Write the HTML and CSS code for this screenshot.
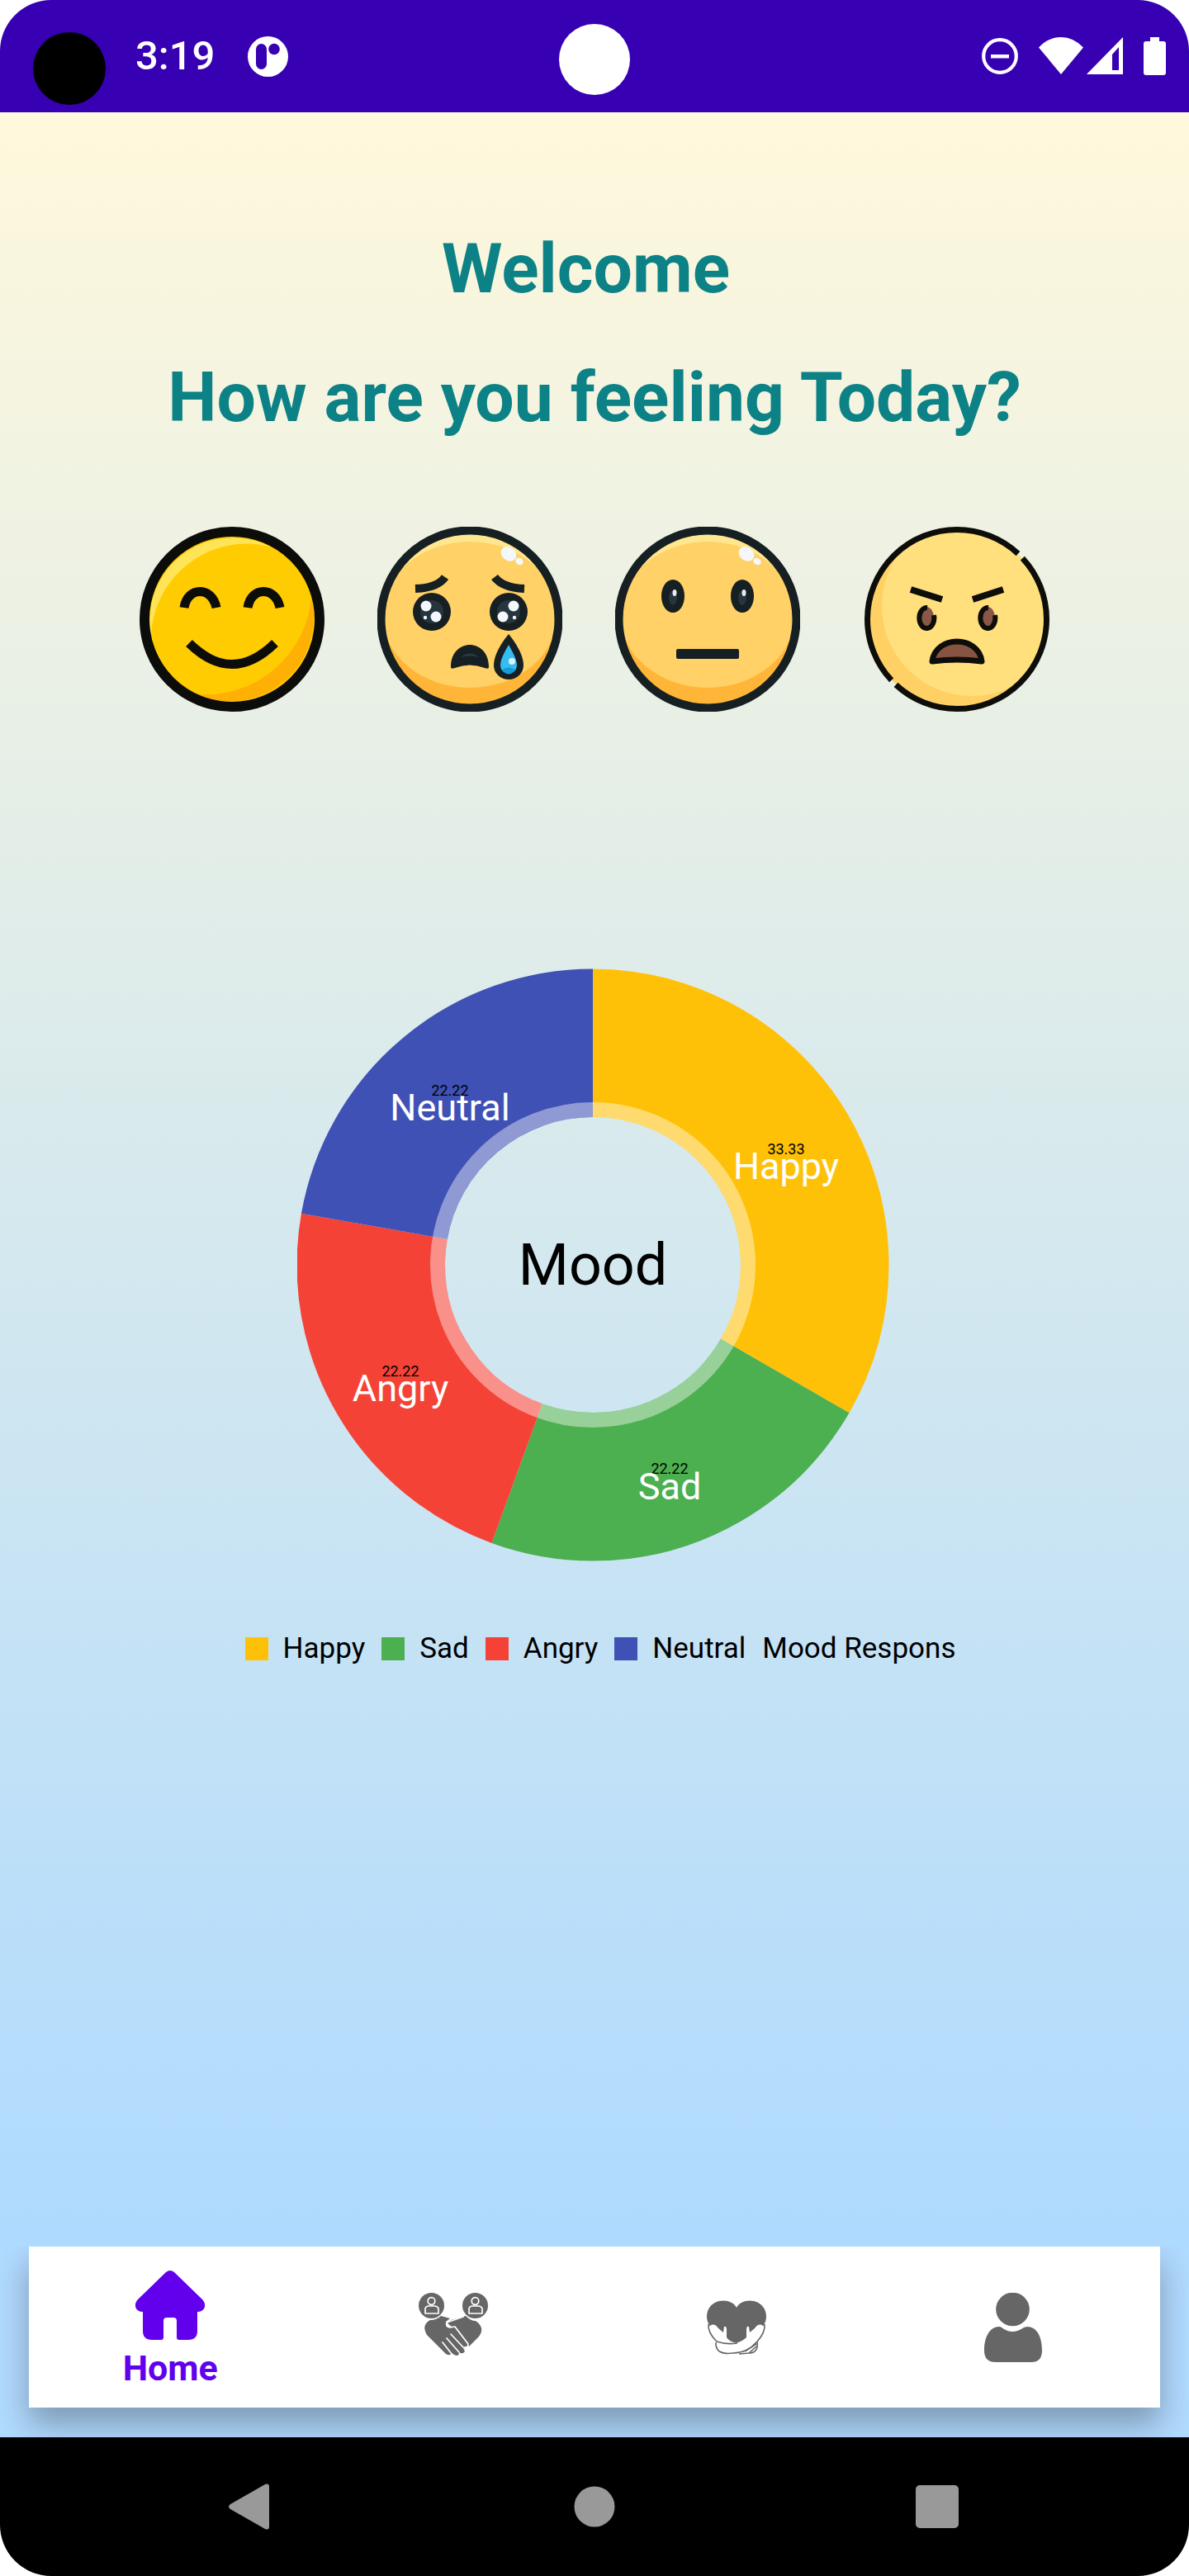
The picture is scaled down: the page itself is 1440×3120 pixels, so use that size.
FILE: index.html
```html
<!DOCTYPE html>
<html lang="en">
<head>
<meta charset="utf-8">
<meta name="viewport" content="width=device-width, initial-scale=1">
<title>Mood tracker</title>
<link rel="stylesheet" href="styles.css">
</head>
<body>
<div class="screen">
  <header class="status-bar">
    <span class="recorder-dot"></span>
    <div class="status-left">
      <span class="clock">3:19</span>
      <svg class="app-badge" viewBox="0 0 49 49" aria-hidden="true">
        <circle cx="24.500" cy="24.500" r="24.500" fill="#fff"/>
        <rect x="10" y="9" width="13" height="31" rx="6.500" fill="#3700b3"/>
        <circle cx="32" cy="15.500" r="6.800" fill="#3700b3"/>
      </svg>
    </div>
    <span class="camera"></span>
    <div class="status-right">
      <svg class="dnd" viewBox="0 0 44 44" aria-hidden="true">
        <circle cx="22" cy="22" r="19.800" fill="none" stroke="#fff" stroke-width="4.200"/>
        <rect x="11" y="20" width="22" height="4.500" fill="#fff"/>
      </svg>
      <svg class="wifi" viewBox="0 0 54 46" aria-hidden="true"><path d="M0 12.500Q12 0 27 0T54 12.500L27 45Z" fill="#fff"/></svg>
      <svg class="signal" viewBox="0 0 44 46" aria-hidden="true"><path fill-rule="evenodd" d="M44 0V45H0ZM39 12L31 21V40H39Z" fill="#fff"/></svg>
      <svg class="battery" viewBox="0 0 27 46" aria-hidden="true"><path d="M8 0H19V5H24Q27 5 27 8V43Q27 46 24 46H3Q0 46 0 43V8Q0 5 3 5H8Z" fill="#fff"/></svg>
    </div>
  </header>

  <main class="content">
    <h1 class="heading">Welcome </h1>
    <h2 class="heading">How are you feeling Today?</h2>

    <div class="moods">
      <button class="mood" type="button" aria-label="Happy">
        <svg viewBox="0 0 224 224" aria-hidden="true">
          <circle cx="112" cy="112" r="106" fill="#ffcc02"/>
          <path d="M14 134A101 101 0 0 1 158 24A116 116 0 0 0 14 134Z" fill="#ffe458"/>
          <path d="M208 86A101 101 0 0 1 70 203A129 129 0 0 0 208 86Z" fill="#ffb005"/>
          <circle cx="112" cy="112" r="106" fill="none" stroke="#0c0c0a" stroke-width="12"/>
          <g fill="none" stroke="#0c0c0a" stroke-width="11">
            <path d="M54 98C58 72 88 72 93 98M131 98C135 72 165 72 170 98"/>
            <path d="M60 141Q112 192 164 141"/>
          </g>
        </svg>
      </button>
      <button class="mood" type="button" aria-label="Sad">
        <svg viewBox="0 0 224 224" aria-hidden="true">
          <path d="M5 112a107 107 0 0 1 214 0Z" fill="#ffe78f"/>
          <path d="M5 112a107 107 0 0 0 214 0Z" fill="#ffb638"/>
          <ellipse cx="112" cy="106.500" rx="106" ry="88.500" fill="#ffd166"/>
          <circle cx="112" cy="112" r="107.500" fill="none" stroke="#161f22" stroke-width="10"/>
          <ellipse cx="159" cy="33" rx="10" ry="8" transform="rotate(35 159 33)" fill="#f4f8fd"/>
          <ellipse cx="172" cy="42" rx="5" ry="4" transform="rotate(35 172 42)" fill="#f4f8fd"/>
          <path d="M46 75Q73 74 82 61M142 61Q152 74 178 75" fill="none" stroke="#161f22" stroke-width="10"/>
          <g fill="#161f22"><circle cx="66" cy="103" r="23"/><circle cx="159" cy="103" r="23"/></g>
          <g fill="#27353e"><circle cx="66" cy="103" r="14"/><circle cx="159" cy="103" r="14"/></g>
          <g fill="#f4f8fd">
            <circle cx="59" cy="96" r="6.500"/><circle cx="71" cy="109" r="6.500"/><circle cx="58" cy="110" r="2.200"/>
            <circle cx="165" cy="96" r="6.500"/><circle cx="152" cy="109" r="6.500"/><circle cx="166" cy="110" r="2.200"/>
          </g>
          <path d="M89 170C89 134 135 134 135 170Q135 173 130 171Q112 164 94 171Q89 173 89 170Z" fill="#161f22"/>
          <path d="M101 158Q112 149 123 158Q112 155 101 158Z" fill="#2c3942"/>
          <path d="M159 130C164 136 177 153 177 168A18 17 0 0 1 141 168C141 153 154 136 159 130Z" fill="#161f22"/>
          <path d="M159 143C163 150 169 160 169 168A10 10 0 0 1 149 168C149 160 155 150 159 143Z" fill="#35bdf3"/>
          <path d="M151 173Q159 168 167 173Q159 184 151 173Z" fill="#159bd8"/>
          <circle cx="163" cy="163" r="4" fill="#d8f3ff"/>
        </svg>
      </button>
      <button class="mood" type="button" aria-label="Neutral">
        <svg viewBox="0 0 224 224" aria-hidden="true">
          <path d="M5 112a107 107 0 0 1 214 0Z" fill="#ffe78f"/>
          <path d="M5 112a107 107 0 0 0 214 0Z" fill="#ffb638"/>
          <ellipse cx="112" cy="106.500" rx="106" ry="88.500" fill="#ffd166"/>
          <circle cx="112" cy="112" r="107.500" fill="none" stroke="#161f22" stroke-width="10"/>
          <ellipse cx="159" cy="33" rx="10" ry="8" transform="rotate(35 159 33)" fill="#f4f8fd"/>
          <ellipse cx="172" cy="42" rx="5" ry="4" transform="rotate(35 172 42)" fill="#f4f8fd"/>
          <g fill="#161f22"><ellipse cx="70" cy="84" rx="14" ry="20"/><ellipse cx="154" cy="84" rx="14" ry="20"/><rect x="74" y="148" width="76" height="12" rx="2"/></g>
          <g fill="#27353e"><ellipse cx="70" cy="86" rx="5" ry="9"/><ellipse cx="154" cy="86" rx="5" ry="9"/></g>
          <g fill="#e6ecf2"><ellipse cx="72" cy="80" rx="2.500" ry="4"/><ellipse cx="156" cy="80" rx="2.500" ry="4"/></g>
        </svg>
      </button>
      <button class="mood mood-angry" type="button" aria-label="Angry">
        <svg viewBox="0 0 224 224" aria-hidden="true">
          <clipPath id="angry-face"><circle cx="112" cy="112" r="108"/></clipPath>
          <circle cx="112" cy="112" r="108" fill="#ffd064"/>
          <circle cx="130" cy="96" r="109" fill="#ffe07d" clip-path="url(#angry-face)"/>
          <circle cx="112" cy="112" r="108.500" pathLength="360" fill="none" stroke="#0d0d0a" stroke-width="7" stroke-dasharray="176 4" stroke-dashoffset="-137"/>
          <path d="M56 76L94 88M131 88L168 76" fill="none" stroke="#0d0d0a" stroke-width="8"/>
          <g fill="#8a5746"><ellipse cx="75" cy="110" rx="9" ry="13"/><ellipse cx="149" cy="110" rx="9" ry="13"/></g>
          <path d="M76 98A9 12.500 0 1 0 84 107M150 98A9 12.500 0 1 0 158 107" fill="none" stroke="#0d0d0a" stroke-width="6"/>
          <path d="M82 163C86 131 138 131 142 163Q112 159 82 163Z" fill="#885442" stroke="#0d0d0a" stroke-width="7" stroke-linejoin="round"/>
        </svg>
      </button>
    </div>

    <figure class="chart">
      <svg class="donut" viewBox="-358 -360 720 720" role="img" aria-label="Mood responses">
        <g fill="none" stroke-width="179.500" transform="rotate(-90)">
          <circle r="268.750" pathLength="360" stroke="#ffc107" stroke-dasharray="120 240"/>
          <circle r="268.750" pathLength="360" stroke="#4caf50" stroke-dasharray="80 280" stroke-dashoffset="-120"/>
          <circle r="268.750" pathLength="360" stroke="#f44336" stroke-dasharray="80 280" stroke-dashoffset="-200"/>
          <circle r="268.750" pathLength="360" stroke="#3f51b5" stroke-dasharray="80 280" stroke-dashoffset="-280"/>
        </g>
        <circle r="188" fill="none" stroke="#fff" stroke-width="18" stroke-opacity=".42"/>
        <g class="slice-value">
          <text x="234" y="-134">33.33</text>
          <text x="93" y="253">22.22</text>
          <text x="-233" y="135">22.22</text>
          <text x="-173" y="-205">22.22</text>
        </g>
        <g class="slice-label">
          <text x="234" y="-104">Happy</text>
          <text x="93" y="284">Sad</text>
          <text x="-233" y="165">Angry</text>
          <text x="-173" y="-175">Neutral</text>
        </g>
        <text class="donut-title" x="0" y="24">Mood</text>
      </svg>
      <figcaption class="legend">
        <span class="key"><i class="swatch happy"></i>Happy</span>
        <span class="key"><i class="swatch sad"></i>Sad</span>
        <span class="key"><i class="swatch angry"></i>Angry</span>
        <span class="key"><i class="swatch neutral"></i>Neutral</span>
        <span class="key">Mood Respons</span>
      </figcaption>
    </figure>
  </main>

  <div class="tab-area">
    <nav class="tabs" aria-label="Main">
      <a class="tab active" href="#home">
        <svg viewBox="0 0 84 84" aria-hidden="true"><path d="M37 2Q42-2 47 2L81 35Q85 39 84 44Q82 50 75 50V73Q75 84 64 84H53Q50 84 50 81V61Q50 57 46 57H38Q34 57 34 61V81Q34 84 31 84H20Q9 84 9 73V50Q2 50 0 44Q-1 39 3 35Z" fill="currentColor"/></svg>
        <span>Home</span>
      </a>
      <a class="tab" href="#community" aria-label="Community">
        <svg viewBox="0 0 84 84" aria-hidden="true">
          <g fill="currentColor">
            <circle cx="15.500" cy="15.500" r="15.500"/><circle cx="68.500" cy="15.500" r="15.500"/>
            <path d="M27 28L38 31L33 35Q32 40 38 42L44 42L60 63Q58 68 54 67L56 71Q53 75 49 72Q49 78 43 75L40 73Q38 77 33 74L10 51Q3 39 14 33Q22 33 27 28Z"/>
            <path d="M39 33L57 28Q63 34 69 34Q81 42 73 53L61 65L45 42Q37 41 35 36Z"/>
          </g>
          <g fill="none" stroke="#fff" stroke-width="1.700" stroke-linejoin="round" stroke-linecap="round">
            <circle cx="15.500" cy="10" r="4.300"/><circle cx="68.500" cy="10" r="4.300"/>
            <path d="M8 25V19Q9 16 12 16H19Q23 16 24 19V25ZM61 25V19Q62 16 65 16H72Q76 16 77 19V25Z"/>
            <path d="M54 29L34 36Q32 41 38 42L44 41L60 62Q60 67 55 66M39 50L54 66M34 55L49 72M29 60L40 74"/>
          </g>
        </svg>
      </a>
      <a class="tab" href="#care" aria-label="Self care">
        <svg viewBox="0 0 84 84" aria-hidden="true">
          <path d="M43 18C36 4 7 7 7 29C7 43 25 57 43 61C61 57 79 43 79 29C79 7 50 4 43 18Z" fill="currentColor"/>
          <path d="M11 40Q16 36 21 43L27 48L28 41Q31 40 31 45V54Q34 59 42 61Q50 59 55 54V45Q55 40 58 41L59 48L65 43Q70 36 75 40Q79 49 67 58Q71 69 61 73Q57 74 50 73Q42 75 32 73Q17 75 18 59Q8 49 11 40Z" fill="#fff"/>
          <path d="M9 38Q8 48 19 59Q31 63 44 61M77 38Q78 48 68 59C60 68 51 73 39 73Q17 76 18 60M68 59Q70 72 59 73L46 74M53 71L67 62M58 73L67 65" fill="none" stroke="currentColor" stroke-width="1.600"/>
        </svg>
      </a>
      <a class="tab" href="#profile" aria-label="Profile">
        <svg viewBox="0 0 84 84" aria-hidden="true"><g fill="currentColor"><circle cx="34.500" cy="20" r="20.300"/><path d="M18 41Q20 41 21 42Q34 52 48 42L52 41C63 41 70 52 70 70Q70 84 57 84H14Q0 84 0 70C0 53 7 41 18 41Z"/></g></svg>
      </a>
    </nav>
  </div>

  <footer class="system-nav">
    <button type="button" aria-label="Back"><svg viewBox="3 0 56 56" aria-hidden="true"><path d="M47 1Q52-1 52 4V52Q52 57 47 55L5 31Q1 28 5 25Z" fill="#999"/></svg></button>
    <button type="button" aria-label="Home screen"><svg viewBox="0 0 56 56" aria-hidden="true"><circle cx="28" cy="28" r="24.500" fill="#999"/></svg></button>
    <button type="button" aria-label="Recent apps"><svg viewBox="0 0 56 56" aria-hidden="true"><rect x="2" y="2" width="52" height="52" rx="5" fill="#999"/></svg></button>
  </footer>
</div>
</body>
</html>
```
FILE: styles.css
```css
* {
  box-sizing: border-box;
}

body {
  margin: 0;
  background: #fff;
  font-family: Roboto, "Liberation Sans", sans-serif;
}

button {
  padding: 0;
  border: 0;
  background: none;
  cursor: pointer;
}

svg {
  display: block;
}

.screen {
  display: flex;
  flex-direction: column;
  min-height: 100vh;
  overflow: hidden;
  border-radius: 62px;
}

/* Status bar */
.status-bar {
  position: relative;
  display: grid;
  grid-template-columns: 1fr auto 1fr;
  align-items: center;
  height: 136px;
  padding: 0 28px;
  background: #3700b3;
  color: #fff;
}

.recorder-dot {
  position: absolute;
  left: 40px;
  top: 39px;
  width: 88px;
  height: 88px;
  border-radius: 50%;
  background: #000;
}

.status-left {
  display: flex;
  align-items: center;
  gap: 40px;
  padding-left: 136px;
}

.clock {
  font-size: 49px;
  line-height: 56px;
  font-weight: 500;
}

.app-badge {
  width: 49px;
  height: 49px;
}

.camera {
  width: 86px;
  height: 86px;
  margin-top: 8px;
  border-radius: 50%;
  background: #fff;
}

.status-right {
  display: flex;
  align-items: center;
  justify-content: flex-end;
}

.dnd {
  width: 44px;
  height: 44px;
  margin-right: 25px;
}

.wifi {
  width: 54px;
  height: 46px;
  margin-right: 4px;
}

.signal {
  width: 44px;
  height: 46px;
  margin-right: 25px;
}

.battery {
  width: 27px;
  height: 46px;
}

/* Content */
.content {
  flex: 1;
  padding: 134px 24px 80px;
  background: linear-gradient(#fff8dc, #aedaff);
}

.heading {
  margin: 0 0 44px;
  color: #0c8286;
  font-size: 84px;
  line-height: 112px;
  font-weight: 700;
  text-align: center;
  white-space: break-spaces;
}

.moods {
  display: flex;
  justify-content: center;
  gap: 64px;
  margin-top: 100px;
}

.mood {
  width: 224px;
  height: 224px;
}

.mood-angry {
  margin-left: 14px;
}

.chart {
  margin: 310px 0 0;
}

.donut {
  width: 720px;
  max-width: 100%;
  margin: 0 auto;
  text-anchor: middle;
}

.slice-value {
  fill: #000;
  font-size: 18px;
}

.slice-label {
  fill: #fff;
  font-size: 45px;
}

.donut-title {
  fill: #000;
  font-size: 70px;
}

.legend {
  display: flex;
  justify-content: center;
  gap: 20px;
  margin-top: 84px;
  padding-left: 14px;
  color: #000;
  font-size: 35px;
  line-height: 42px;
}

.key {
  display: flex;
  align-items: center;
  gap: 18px;
}

.swatch {
  width: 28px;
  height: 28px;
}

.happy {
  background: #ffc107;
}

.sad {
  background: #4caf50;
}

.angry {
  background: #f44336;
}

.neutral {
  background: #3f51b5;
}

/* Bottom tabs */
.tab-area {
  padding: 0 35px 36px;
  overflow: hidden;
  background: #b1daff;
}

.tabs {
  display: grid;
  grid-template-columns: repeat(4, 1fr);
  height: 195px;
  background: #fff;
  box-shadow: 0 20px 36px rgba(0, 0, 0, 0.3);
}

.tab {
  display: flex;
  flex-direction: column;
  align-items: center;
  justify-content: center;
  gap: 10px;
  color: #666;
  text-decoration: none;
}

.tab svg {
  width: 84px;
  height: 84px;
}

.tab span {
  font-size: 43px;
  line-height: 48px;
  font-weight: 700;
}

.active {
  padding-top: 4px;
  color: #6200ee;
}

/* System navigation */
.system-nav {
  display: flex;
  align-items: center;
  justify-content: center;
  gap: 359px;
  height: 168px;
  background: #000;
}

.system-nav button {
  width: 56px;
  height: 56px;
}
```
